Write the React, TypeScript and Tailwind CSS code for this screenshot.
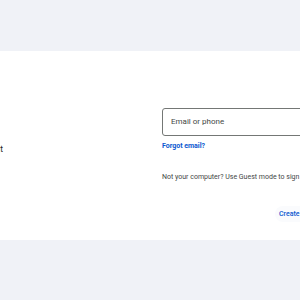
export default function App() {
    return (
        <div className="w-[300px] h-[300px] overflow-hidden bg-[#f0f2f7] pt-[51px] font-['Roboto',sans-serif]">
            {/* Sign-in card, cropped on both sides */}
            <div className="h-[189px] w-[560px] -ml-[130px] bg-white flex">
                {/* Left column */}
                <div className="w-[292px] shrink-0 pr-[159px] pt-[92px] text-right">
                    <p className="text-[8.5px] text-[#1f1f1f] whitespace-nowrap">Use your Google Account</p>
                </div>

                {/* Right column */}
                <div className="flex-1 pt-[57px]">
                    <div className="h-[28px] w-[200px] border border-[#747775] rounded-[3px] flex items-center px-[8px]">
                        <span className="text-[8px] text-[#444746]">Email or phone</span>
                    </div>
                    <a href="#" className="block mt-[5px] text-[7px] font-bold text-[#0b57d0] leading-[10px]">
                        Forgot email?
                    </a>
                    <p className="mt-[21px] text-[7px] text-[#444746] leading-[10px] whitespace-nowrap">
                        Not your computer? Use Guest mode to sign in privately.
                    </p>
                    <div className="mt-[24px] flex">
                        <button className="ml-[113px] h-[16px] px-[4px] rounded-full bg-[#fafbfd] text-[7px] font-medium text-[#0b57d0]">
                            Create account
                        </button>
                    </div>
                </div>
            </div>
        </div>
    );
}
